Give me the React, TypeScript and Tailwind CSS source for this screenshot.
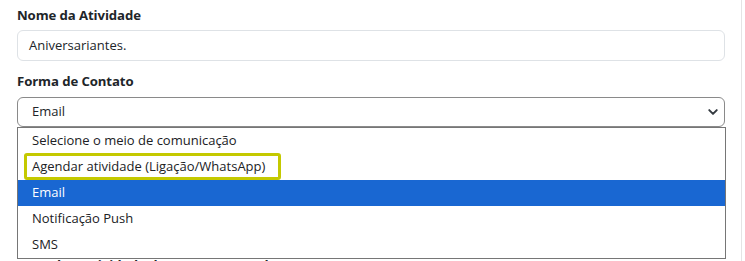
const options = [
  "Selecione o meio de comunicação",
  "Agendar atividade (Ligação/WhatsApp)",
  "Email",
  "Notificação Push",
  "SMS",
];

function Chevron() {
  return (
    <svg viewBox="0 0 16 16" className="h-[12px] w-[16px]" fill="none">
      <path d="m3 5.5 5 5 5-5" stroke="#343a40" strokeWidth="2.6" strokeLinecap="round" strokeLinejoin="round" />
    </svg>
  );
}

export default function App() {
  return (
    <div className="flex h-[261px] w-[745px] overflow-hidden bg-white font-['Open_Sans',sans-serif] text-[13px] text-[#212529]">
      <div className="flex-1 pl-[17px] pr-[16px] pt-[5px]">
        <label className="mb-[4px] block text-[13.2px] font-bold leading-[21px] tracking-[-0.1px]">Nome da Atividade</label>
        <div className="mb-[10px] flex h-[31px] items-center rounded-[6px] border border-[#dee2e6] px-[11px]">
          Aniversariantes.
        </div>

        <label className="mb-[5px] block text-[13.2px] font-bold leading-[21px] tracking-[-0.1px]">Forma de Contato</label>
        <div className="relative mb-[10px]">
          <div className="flex h-[30px] items-center justify-between rounded-[6px] border border-[#8a8a8a] pl-[14px] pr-[3px]">
            <span>Email</span>
            <Chevron />
          </div>

          <ul className="absolute left-0 top-[30px] z-10 w-[709px] border border-[#767676] bg-white">
            {options.map((o, i) => (
              <li
                key={o}
                className={
                  "relative flex h-[26px] items-center pl-[14px] " +
                  (i === 2 ? "bg-[#1967d2] text-white" : "text-[#202124]")
                }
              >
                {o}
                {i === 1 && (
                  <span className="absolute left-[6px] top-[-1px] h-[27px] w-[257px] rounded-[3px] border-[3px] border-[#c4c900]" />
                )}
              </li>
            ))}
          </ul>
        </div>

        <label className="mb-[5px] block font-bold leading-[21px]">Mensagem</label>
        <div className="mb-[10px] h-[82px] rounded-[6px] border border-[#dee2e6]" />

        <label className="block text-[13.2px] font-bold leading-[21px]">Quando a atividade deve ser executada?</label>
      </div>
      <div className="w-[4px] border-l border-[#e4e4e4]" />
    </div>
  );
}
